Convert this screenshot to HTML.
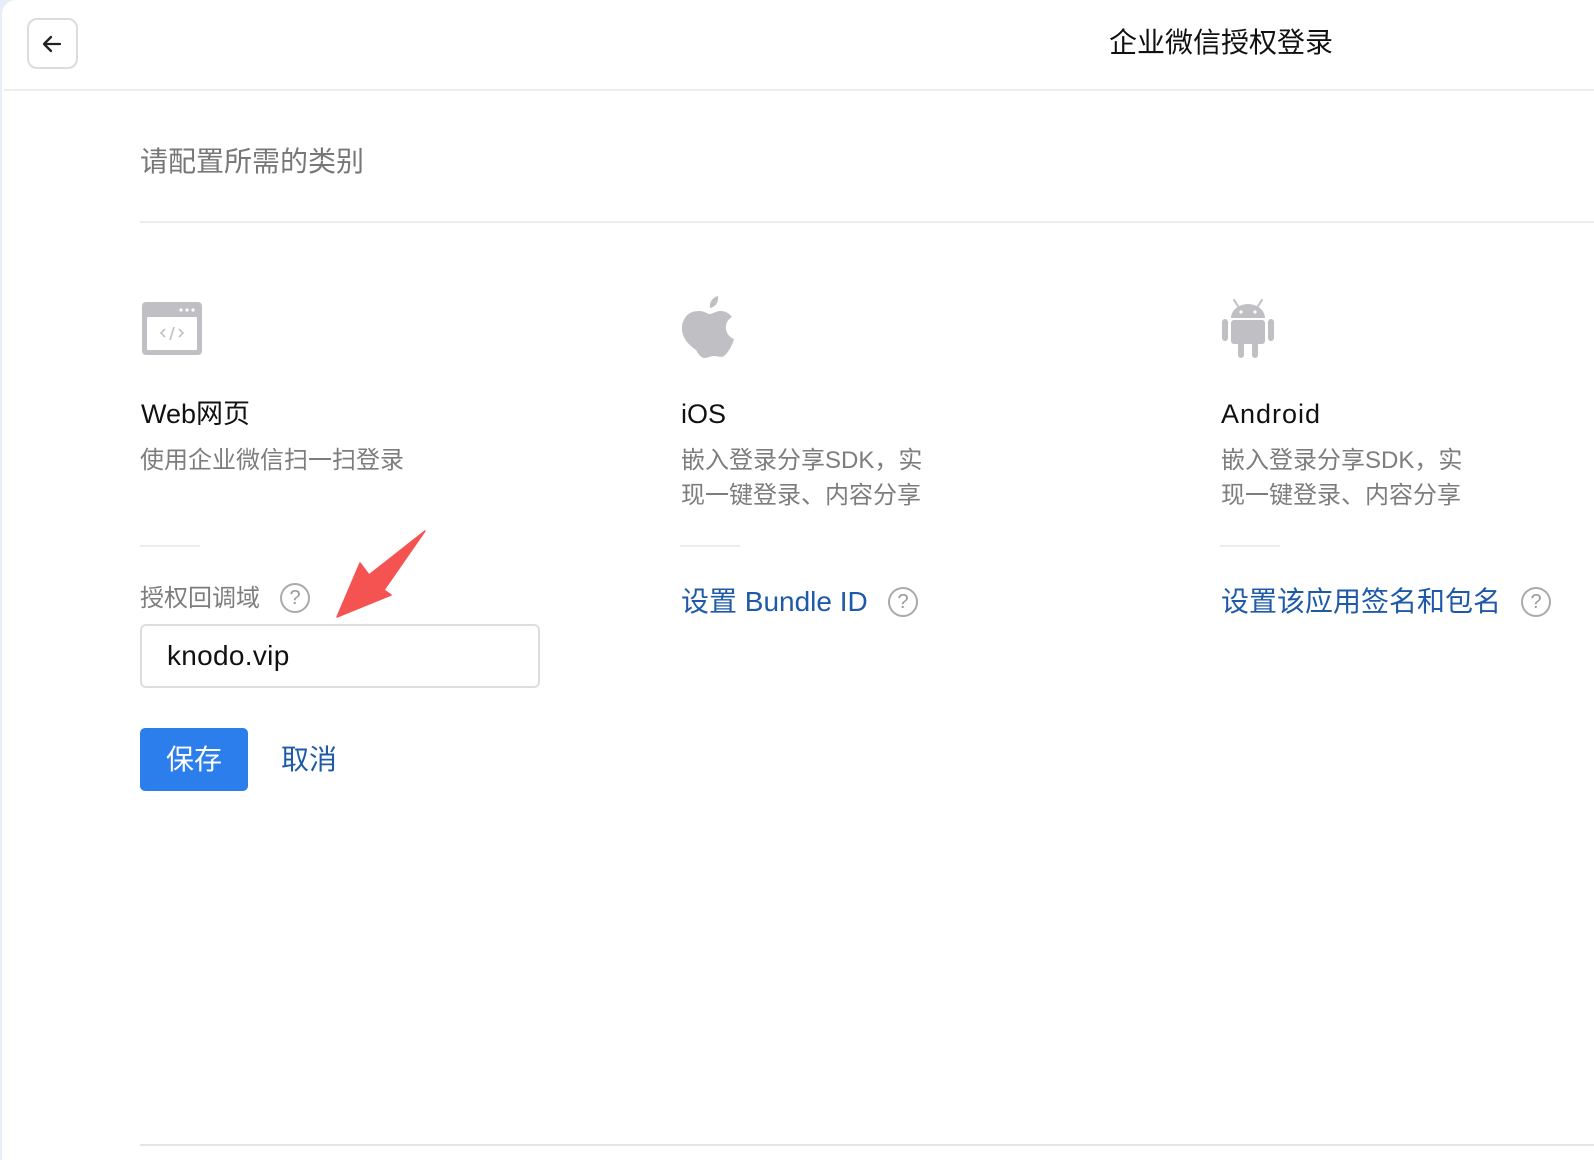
<!DOCTYPE html>
<html><head><meta charset="utf-8"><style>
*{margin:0;padding:0;box-sizing:border-box}
body{width:1594px;height:1154px;background:#e8eef9;font-family:"Liberation Sans","Noto Sans CJK SC",sans-serif;position:relative;overflow:hidden}
.card{position:absolute;left:2px;top:0;width:1600px;height:1160px;background:#fff;border-top-left-radius:14px}
.a{position:absolute;white-space:nowrap;line-height:1}
.hl{position:absolute;height:2px;background:#ececf0}
.gray{color:#7d7d7d}
.blue{color:#1e5aa8}
.help{position:absolute;width:30px;height:30px;border:2px solid #aaa;border-radius:50%;color:#999;font-size:20px;text-align:center;line-height:26px}
</style></head><body>
<div class="card"></div>
<div style="position:absolute;left:27px;top:18px;width:51px;height:51px;border:2px solid #dcdcdc;border-radius:10px;background:#fff"></div>
<svg style="position:absolute;left:40px;top:32px" width="24" height="24" viewBox="0 0 24 24"><path d="M20 12H4M11 5l-7 7 7 7" fill="none" stroke="#222" stroke-width="2.3" stroke-linecap="round" stroke-linejoin="round"/></svg>
<div class="a" style="left:1109px;top:29px;font-size:28px;color:#111">企业微信授权登录</div>
<div class="hl" style="left:4px;top:89px;width:1600px"></div>
<div class="a gray" style="left:140px;top:148px;font-size:28px;color:#777">请配置所需的类别</div>
<div class="hl" style="left:140px;top:221px;width:1460px"></div>
<svg style="position:absolute;left:142px;top:302px" width="60" height="53" viewBox="0 0 60 53"><rect x="0" y="0" width="60" height="53" rx="4" fill="#c0c0c4"/><rect x="5" y="15" width="50" height="33" rx="1" fill="#fff"/><circle cx="39" cy="8" r="1.6" fill="#fff"/><circle cx="45" cy="8" r="1.6" fill="#fff"/><circle cx="51" cy="8" r="1.6" fill="#fff"/><path d="M23 27l-4 4 4 4M37 27l4 4-4 4M32 25l-4 13" fill="none" stroke="#c0c0c4" stroke-width="1.6"/></svg>
<svg style="position:absolute;left:682px;top:296px" width="52" height="62" viewBox="0 0 52 62"><path d="M36 0c1 5-2 11-8 12-1-6 3-11 8-12zM17 15c6 0 8 3 11 3s5-3 11-3c4 0 8 2 11 6-9 5-8 18 2 22-2 7-6 14-10 17-3 2-6 0-10 0s-6 2-9 2c-4 0-6-3-9-8C-1 44-3 31 3 22c3-5 8-7 14-7z" fill="#c0c0c4"/></svg>
<svg style="position:absolute;left:1220px;top:298px" width="56" height="62" viewBox="0 0 56 62"><path d="M14 2l4 6M42 2l-4 6" stroke="#c0c0c4" stroke-width="2" stroke-linecap="round"/><path d="M11 20a17 14 0 0 1 34 0z" fill="#c0c0c4"/><circle cx="21" cy="14" r="1.6" fill="#fff"/><circle cx="35" cy="14" r="1.6" fill="#fff"/><rect x="11" y="22" width="34" height="24" rx="3" fill="#c0c0c4"/><rect x="2" y="21" width="6" height="22" rx="3" fill="#c0c0c4"/><rect x="48" y="21" width="6" height="22" rx="3" fill="#c0c0c4"/><rect x="18" y="42" width="6" height="18" rx="3" fill="#c0c0c4"/><rect x="32" y="42" width="6" height="18" rx="3" fill="#c0c0c4"/></svg>
<div class="a" style="left:141px;top:401px;font-size:27px;color:#111">Web网页</div>
<div class="a" style="left:681px;top:401px;font-size:27px;color:#111">iOS</div>
<div class="a" style="left:1221px;top:401px;font-size:27px;color:#111;letter-spacing:1px">Android</div>
<div class="a gray" style="left:140px;top:449px;font-size:24px">使用企业微信扫一扫登录</div>
<div class="a gray" style="left:681px;top:443px;font-size:24px;line-height:35px">嵌入登录分享SDK，实<br>现一键登录、内容分享</div>
<div class="a gray" style="left:1221px;top:443px;font-size:24px;line-height:35px">嵌入登录分享SDK，实<br>现一键登录、内容分享</div>
<div class="hl" style="left:140px;top:545px;width:60px"></div>
<div class="hl" style="left:680px;top:545px;width:60px"></div>
<div class="hl" style="left:1220px;top:545px;width:60px"></div>
<div class="a gray" style="left:140px;top:587px;font-size:24px">授权回调域</div>
<div class="help" style="left:280px;top:583px">?</div>
<div class="a blue" style="left:681px;top:588px;font-size:28px">设置 Bundle ID</div>
<div class="help" style="left:888px;top:587px">?</div>
<div class="a blue" style="left:1221px;top:588px;font-size:28px">设置该应用签名和包名</div>
<div class="help" style="left:1521px;top:587px">?</div>
<div style="position:absolute;left:140px;top:624px;width:400px;height:64px;border:2px solid #ddd;border-radius:6px"></div>
<div class="a" style="left:167px;top:642px;font-size:28px;color:#111;letter-spacing:0.3px">knodo.vip</div>
<div style="position:absolute;left:140px;top:728px;width:108px;height:63px;background:#2b7eec;border-radius:5px;color:#fff;font-size:28px;text-align:center;line-height:63px">保存</div>
<div class="a blue" style="left:281px;top:746px;font-size:28px">取消</div>
<svg style="position:absolute;left:0;top:0" width="600" height="700"><path d="M425 531L384 590 391 595 337 617 360 563 369 575Z" fill="#f55252" stroke="#f55252" stroke-width="1.5" stroke-linejoin="round"/></svg>
<div class="hl" style="left:140px;top:1144px;width:1460px;background:#e4e4ea"></div>
</body></html>
